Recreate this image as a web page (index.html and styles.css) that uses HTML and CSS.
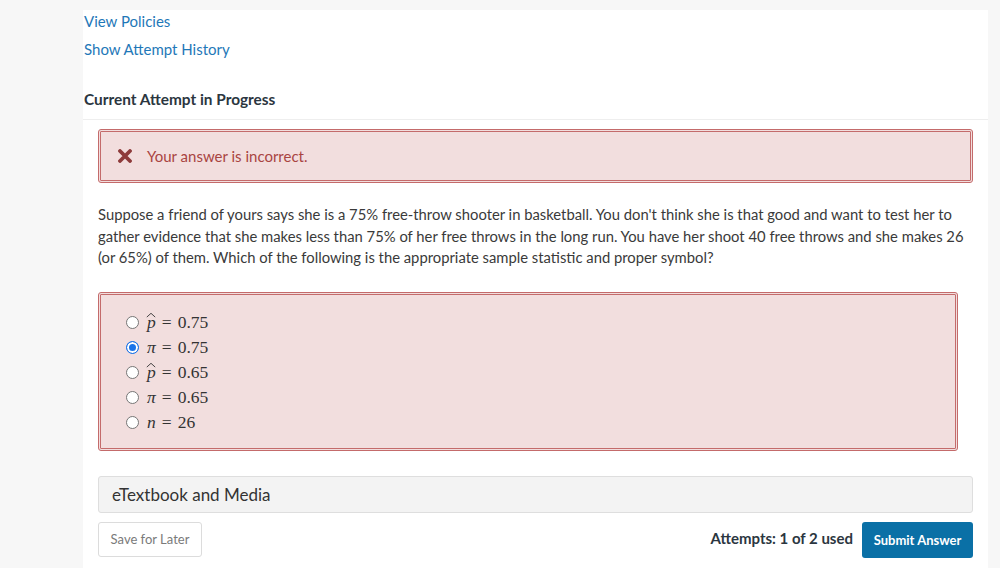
FILE: index.html
```html
<!DOCTYPE html>
<html>
<head>
<meta charset="utf-8">
<link rel="stylesheet" href="styles.css">
</head>
<body>
<div class="panel">
  <div class="links">
    <a class="link" href="#">View Policies</a>
    <a class="link" href="#">Show Attempt History</a>
  </div>
  <h2 class="heading">Current Attempt in Progress</h2>
  <div class="attempt">
    <div class="alert">
      <svg class="x-icon" viewBox="0 0 14 14" width="14" height="14"><path d="M2 2 L12 12 M12 2 L2 12" stroke="#8e3b3b" stroke-width="3.8" stroke-linecap="round"/></svg>
      <span>Your answer is incorrect.</span>
    </div>
    <p class="question">Suppose a friend of yours says she is a 75% free-throw shooter in basketball. You don't think she is that good and want to test her to gather evidence that she makes less than 75% of her free throws in the long run. You have her shoot 40 free throws and she makes 26 (or 65%) of them. Which of the following is the appropriate sample statistic and proper symbol?</p>
    <div class="answers">
      <label class="opt"><span class="radio"></span><span class="math"><span class="hat">p<svg class="hat-mark" viewBox="0 0 10 5" width="10" height="6"><path d="M0.8 4.6 L5 0.8 L9.2 4.6" fill="none" stroke="#333" stroke-width="0.9"/></svg></span><span class="eq">=</span>0.75</span></label>
      <label class="opt"><span class="radio on"></span><span class="math"><i>π</i><span class="eq">=</span>0.75</span></label>
      <label class="opt"><span class="radio"></span><span class="math"><span class="hat">p<svg class="hat-mark" viewBox="0 0 10 5" width="10" height="6"><path d="M0.8 4.6 L5 0.8 L9.2 4.6" fill="none" stroke="#333" stroke-width="0.9"/></svg></span><span class="eq">=</span>0.65</span></label>
      <label class="opt"><span class="radio"></span><span class="math"><i>π</i><span class="eq">=</span>0.65</span></label>
      <label class="opt"><span class="radio"></span><span class="math"><i>n</i><span class="eq">=</span>26</span></label>
    </div>
    <div class="media">eTextbook and Media</div>
    <div class="actions">
      <button class="btn-save">Save for Later</button>
      <div class="right">
        <span class="attempts">Attempts: 1 of 2 used</span>
        <button class="btn-submit">Submit Answer</button>
      </div>
    </div>
  </div>
</div>
</body>
</html>
```

FILE: styles.css
```css
html, body {
  margin: 0;
  padding: 0;
  background: #f7f7f7;
  font-family: Lato, "Open Sans", sans-serif;
  color: #333;
}
.panel {
  background: #fff;
  margin: 10px 0 0 83px;
  width: 905px;
  height: 570px;
}
.links {
  display: flex;
  flex-direction: column;
  align-items: flex-start;
  gap: 6px;
  padding-left: 1px;
}
.link {
  color: #1f78b8;
  text-decoration: none;
  font-size: 15px;
  line-height: 22px;
}
.heading {
  margin: 28px 0 0 0;
  padding: 0 0 9px 1px;
  font-size: 15.4px;
  line-height: 22px;
  font-weight: 700;
  color: #2b3640;
  border-bottom: 1px solid #eeeeee;
}
.attempt {
  padding: 0 15px;
}
.alert {
  margin-top: 9px;
  height: 48px;
  border: 3px double #c46b6b;
  border-radius: 3px;
  background: #f2dede;
  display: flex;
  align-items: center;
  color: #a94442;
  font-size: 15px;
}
.x-icon {
  margin-left: 17px;
  margin-right: 15px;
}
.question {
  margin: 21px 0 0 0;
  font-size: 14.8px;
  line-height: 21.5px;
  color: #3a3a3a;
}
.answers {
  box-sizing: border-box;
  margin-top: 23px;
  width: 860px;
  border: 3px double #c46b6b;
  border-radius: 3px;
  background: #f2dede;
  padding: 15px 0 13px 25px;
  display: flex;
  flex-direction: column;
}
.opt {
  display: flex;
  align-items: center;
  height: 25px;
}
.radio {
  width: 11px;
  height: 11px;
  border: 1px solid #767676;
  border-radius: 50%;
  background: #fff;
  margin-right: 8px;
  flex: none;
}
.radio.on {
  border: 1px solid #1a73e8;
  background: #1a73e8;
  box-shadow: inset 0 0 0 2px #fff;
}
.math {
  font-family: "Liberation Serif", "Times New Roman", serif;
  font-size: 17.5px;
  color: #333;
  white-space: pre;
}
.math i {
  font-style: italic;
}
.eq {
  margin: 0 6px;
}
.hat {
  position: relative;
  font-style: italic;
  display: inline-block;
}
.hat-mark {
  position: absolute;
  left: -1px;
  top: 0px;
}
.media {
  margin-top: 25px;
  height: 35px;
  border: 1px solid #dedede;
  border-radius: 3px;
  background: #f3f3f3;
  display: flex;
  align-items: center;
  padding-left: 13px;
  font-size: 17px;
  color: #333;
}
.actions {
  margin-top: 9px;
  display: flex;
  justify-content: space-between;
  align-items: flex-start;
}
.btn-save {
  width: 104px;
  height: 35px;
  border: 1px solid #dcdcdc;
  border-radius: 3px;
  background: #fff;
  color: #7a7a7a;
  font-family: Lato, sans-serif;
  font-size: 13px;
}
.right {
  display: flex;
  align-items: center;
  gap: 9px;
}
.attempts {
  font-size: 15px;
  font-weight: 700;
  color: #2b3640;
  margin-top: -4px;
}
.btn-submit {
  width: 111px;
  height: 36px;
  border: none;
  border-radius: 3px;
  background: #0a70a6;
  color: #fff;
  font-family: Lato, sans-serif;
  font-size: 13px;
  font-weight: 700;
}
```
